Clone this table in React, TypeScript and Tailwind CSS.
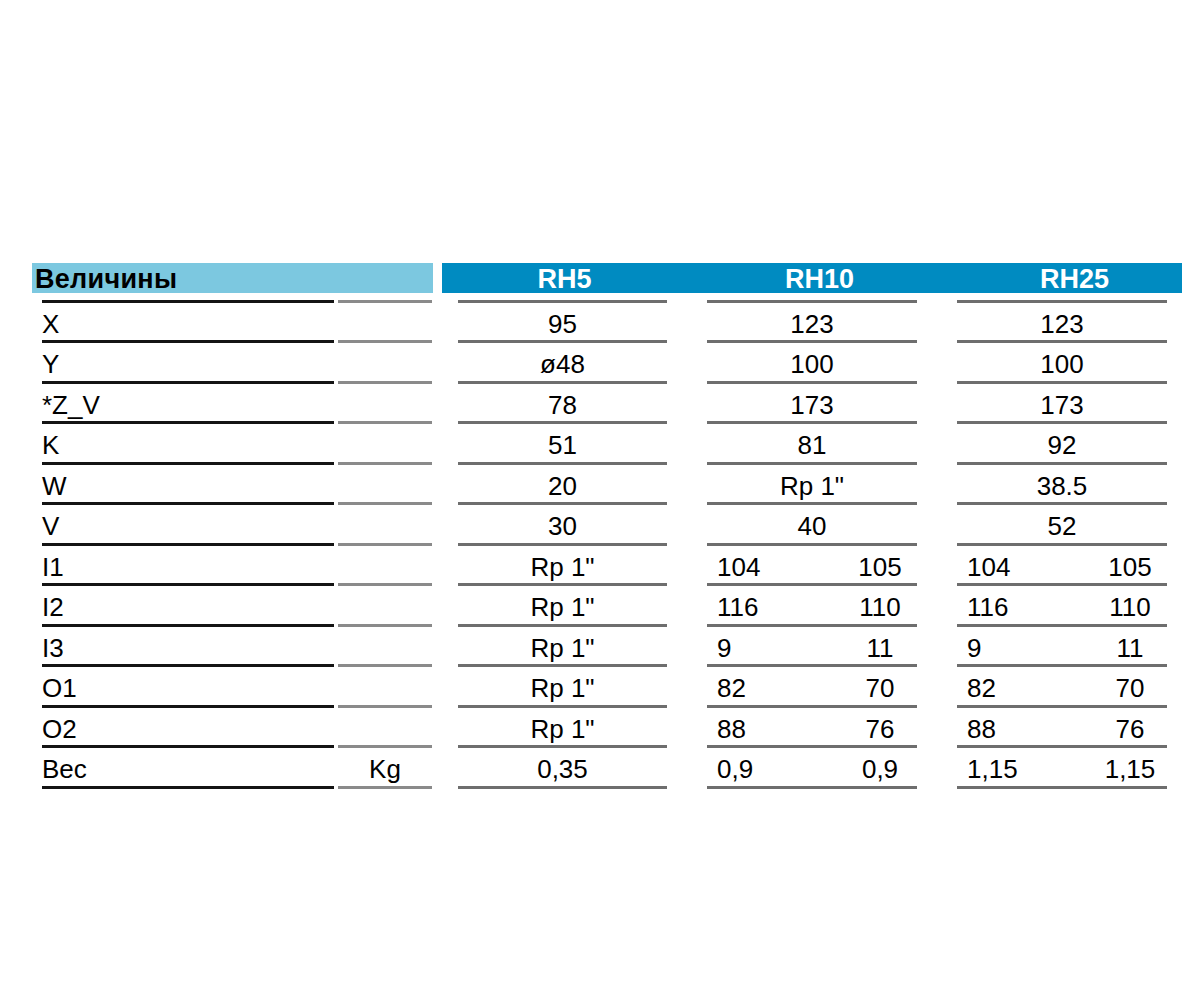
import React from "react";

type Cell = string | [string, string];
type Row = { label: string; unit?: string; vals: [Cell, Cell, Cell] };

const rows: Row[] = [
  { label: "X", vals: ["95", "123", "123"] },
  { label: "Y", vals: ["ø48", "100", "100"] },
  { label: "*Z_V", vals: ["78", "173", "173"] },
  { label: "K", vals: ["51", "81", "92"] },
  { label: "W", vals: ["20", 'Rp 1"', "38.5"] },
  { label: "V", vals: ["30", "40", "52"] },
  { label: "I1", vals: ['Rp 1"', ["104", "105"], ["104", "105"]] },
  { label: "I2", vals: ['Rp 1"', ["116", "110"], ["116", "110"]] },
  { label: "I3", vals: ['Rp 1"', ["9", "11"], ["9", "11"]] },
  { label: "O1", vals: ['Rp 1"', ["82", "70"], ["82", "70"]] },
  { label: "O2", vals: ['Rp 1"', ["88", "76"], ["88", "76"]] },
  { label: "Вес", unit: "Kg", vals: ["0,35", ["0,9", "0,9"], ["1,15", "1,15"]] },
];

const txt = "pt-[8px] leading-[26px] text-[26px] text-black";

function ValCell({ v, w }: { v: Cell; w: string }) {
  return (
    <div className={`${w} shrink-0 h-full border-b-[3px] border-[#6e6e6e] flex ${txt}`}>
      {typeof v === "string" ? (
        <div className="w-full text-center">{v}</div>
      ) : (
        <>
          <div className="flex-1 pl-[10px]">{v[0]}</div>
          <div className="w-[74px] text-center">{v[1]}</div>
        </>
      )}
    </div>
  );
}

export default function App() {
  return (
    <div
      className="w-[1200px] h-[1000px] bg-white pt-[263px]"
      style={{ fontFamily: '"Liberation Sans", Arial, sans-serif' }}
    >
      {/* header */}
      <div className="flex h-[30px] ml-[32px]">
        <div className="w-[401px] shrink-0 bg-[#7cc8e0] pl-[3px] text-[27px] font-bold leading-[32px] tracking-[0.3px] text-black">
          Величины
        </div>
        <div className="w-[9px] shrink-0" />
        <div className="w-[740px] shrink-0 bg-[#008bc1] overflow-hidden">
          <div className="flex -ml-[5px] text-[27px] font-bold leading-[32px] text-white">
            <div className="w-[255px] shrink-0 text-center">RH5</div>
            <div className="w-[255px] shrink-0 text-center">RH10</div>
            <div className="w-[255px] shrink-0 text-center">RH25</div>
          </div>
        </div>
      </div>

      <div className="ml-[42px] mt-[6.5px]">
        {/* top rule */}
        <div className="flex h-[3px]">
          <div className="w-[292px] shrink-0 bg-[#141414]" />
          <div className="w-[4px] shrink-0" />
          <div className="w-[94px] shrink-0 bg-[#8a8a8a]" />
          <div className="w-[26px] shrink-0" />
          <div className="w-[209px] shrink-0 bg-[#6e6e6e]" />
          <div className="w-[40px] shrink-0" />
          <div className="w-[210px] shrink-0 bg-[#6e6e6e]" />
          <div className="w-[40px] shrink-0" />
          <div className="w-[210px] shrink-0 bg-[#6e6e6e]" />
        </div>
        {rows.map((r) => (
          <div key={r.label} className="flex h-[40.5px]">
            <div className={`w-[292px] shrink-0 h-full border-b-[3px] border-[#141414] ${txt}`}>
              {r.label}
            </div>
            <div className="w-[4px] shrink-0" />
            <div className={`w-[94px] shrink-0 h-full border-b-[3px] border-[#8a8a8a] text-center ${txt}`}>
              {r.unit ?? ""}
            </div>
            <div className="w-[26px] shrink-0" />
            <ValCell v={r.vals[0]} w="w-[209px]" />
            <div className="w-[40px] shrink-0" />
            <ValCell v={r.vals[1]} w="w-[210px]" />
            <div className="w-[40px] shrink-0" />
            <ValCell v={r.vals[2]} w="w-[210px]" />
          </div>
        ))}
      </div>
    </div>
  );
}
